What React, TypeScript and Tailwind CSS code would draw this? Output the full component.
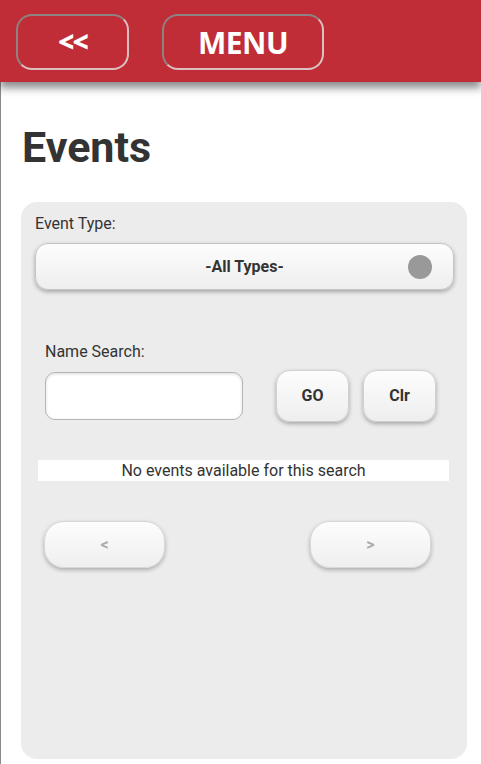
import React from 'react';

export default function App() {
  return (
    <div className="w-[481px] h-[764px] overflow-hidden bg-white relative" style={{ fontFamily: 'Roboto, "Liberation Sans", sans-serif' }}>
      {/* Header bar */}
      <div className="relative z-10 h-[82px] bg-[#c12d37] shadow-[0_6px_8px_rgba(0,0,0,0.45)] flex items-start gap-[33px] pt-[14px] pl-[16px]">
        <button className="w-[113px] h-[56px] rounded-[16px] border-2 border-t-[#8e8383] border-l-[#8e8383] border-b-[#dcc0c0] border-r-[#dcc0c0] flex items-center justify-center text-white text-[28px] font-extrabold tracking-[-2px] pb-[2px]" style={{ fontFamily: '"Open Sans", "Noto Sans", sans-serif' }}>
          &lt;&lt;
        </button>
        <button className="w-[162px] h-[56px] rounded-[16px] border-2 border-t-[#8e8383] border-l-[#8e8383] border-b-[#dcc0c0] border-r-[#dcc0c0] flex items-center justify-center text-white text-[30px] font-bold tracking-[-0.5px]" style={{ fontFamily: '"Open Sans", "Noto Sans", sans-serif' }}>
          MENU
        </button>
      </div>

      {/* Content */}
      <div className="border-l border-[#8a8a8a] h-[682px] pl-[20px] pr-[14px]">
        <h1 className="text-[43px] font-bold text-[#333333] leading-none pt-[44px] pl-[1px]">Events</h1>

        <div className="mt-[33px] bg-[#ececec] rounded-[16px] h-[557px] pt-[12px] px-[13px] pl-[14px]">
          <div className="text-[16px] text-[#333333] leading-[20px]">Event Type:</div>
          <div className="mt-[9px] h-[47px] rounded-[13px] border border-[#c4c4c4] bg-gradient-to-b from-[#fdfdfd] to-[#eeeeee] shadow-[0_2px_4px_rgba(0,0,0,0.3)] flex items-center relative">
            <span className="flex-1 text-center text-[16px] font-bold text-[#333333]">-All Types-</span>
            <span className="absolute right-[21px] top-[11px] w-[24px] h-[24px] rounded-full bg-[#999999]"></span>
          </div>

          <div className="pl-[10px] mt-[52px]">
            <div className="text-[16px] text-[#333333] leading-[20px]">Name Search:</div>
            <div className="flex items-center mt-[8px]">
              <div className="w-[198px] h-[48px] rounded-[10px] border border-[#b5b5b5] bg-white shadow-[inset_0_1px_3px_rgba(0,0,0,0.15)]"></div>
              <button className="ml-[33px] w-[73px] h-[52px] rounded-[14px] border border-[#d0d0d0] bg-gradient-to-b from-[#fdfdfd] to-[#eeeeee] shadow-[0_2px_4px_rgba(0,0,0,0.3)] text-[16px] font-bold text-[#333333]">GO</button>
              <button className="ml-[14px] w-[73px] h-[52px] rounded-[14px] border border-[#d0d0d0] bg-gradient-to-b from-[#fdfdfd] to-[#eeeeee] shadow-[0_2px_4px_rgba(0,0,0,0.3)] text-[16px] font-bold text-[#333333]">Clr</button>
            </div>
          </div>

          <div className="mt-[38px] ml-[3px] mr-[5px] h-[21px] bg-white text-center text-[16px] text-[#333333] leading-[21px]">
            No events available for this search
          </div>

          <div className="flex justify-between mt-[40px] pl-[9px] pr-[23px]">
            <button className="w-[121px] h-[47px] rounded-[20px] border border-[#d8d8d8] bg-gradient-to-b from-[#fdfdfd] to-[#efefef] shadow-[0_2px_4px_rgba(0,0,0,0.28)] text-[16px] font-bold text-[#aaaaaa]">&lt;</button>
            <button className="w-[121px] h-[47px] rounded-[20px] border border-[#d8d8d8] bg-gradient-to-b from-[#fdfdfd] to-[#efefef] shadow-[0_2px_4px_rgba(0,0,0,0.28)] text-[16px] font-bold text-[#aaaaaa]">&gt;</button>
          </div>
        </div>
      </div>
    </div>
  );
}
